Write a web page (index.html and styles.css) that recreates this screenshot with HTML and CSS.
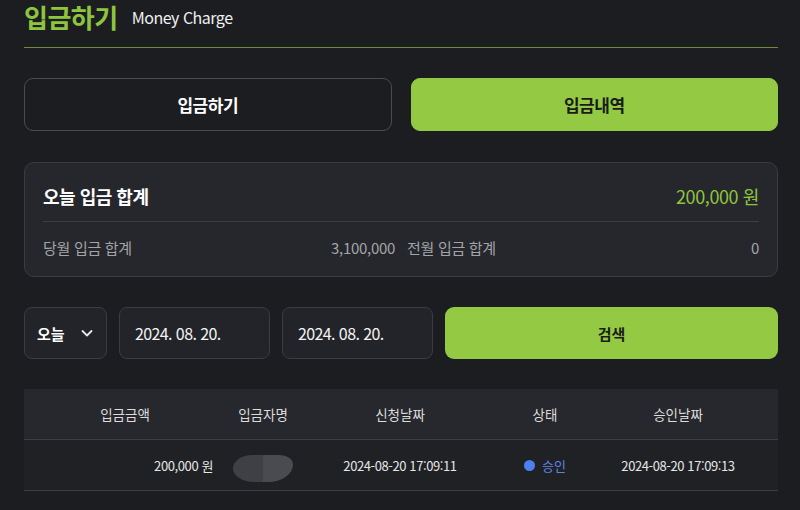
FILE: index.html
```html
<!DOCTYPE html>
<html lang="ko">
<head>
  <meta charset="UTF-8" />
  <meta name="viewport" content="width=device-width, initial-scale=1.0"/>
  <title>입금하기</title>
  <link rel="stylesheet" href="styles.css">
</head>
<body>
  <div class="page">
    <header class="page-head">
      <h1 class="page-title">입금하기</h1>
      <span class="page-sub">Money Charge</span>
    </header>

    <nav class="tabs">
      <button class="tab">입금하기</button>
      <button class="tab active">입금내역</button>
    </nav>

    <section class="summary">
      <div class="summary-top">
        <span class="summary-label">오늘 입금 합계</span>
        <span class="summary-total">200,000 원</span>
      </div>
      <div class="summary-bottom">
        <div class="summary-item">
          <span>당월 입금 합계</span>
          <span>3,100,000</span>
        </div>
        <div class="summary-item">
          <span>전월 입금 합계</span>
          <span>0</span>
        </div>
      </div>
    </section>

    <form class="filter" onsubmit="return false">
      <div class="select">
        <span>오늘</span>
        <svg width="14" height="14" viewBox="0 0 14 14"><path d="M2.5 5 L7 9.5 L11.5 5" fill="none" stroke="#e8e8e8" stroke-width="1.8" stroke-linecap="round" stroke-linejoin="round"/></svg>
      </div>
      <div class="date">2024. 08. 20.</div>
      <div class="date">2024. 08. 20.</div>
      <button class="search">검색</button>
    </form>

    <div class="table">
      <div class="tr th">
        <div>입금금액</div>
        <div>입금자명</div>
        <div>신청날짜</div>
        <div>상태</div>
        <div>승인날짜</div>
      </div>
      <div class="tr td">
        <div class="amount">200,000 원</div>
        <div><span class="blur"></span></div>
        <div class="num">2024-08-20 17:09:11</div>
        <div class="status"><i class="dot"></i>승인</div>
        <div class="num">2024-08-20 17:09:13</div>
      </div>
    </div>
  </div>
</body>
</html>
```

FILE: styles.css
```css
body {
  margin: 0;
  background: #1c1d21;
  color: #ffffff;
  font-family: "Noto Sans CJK KR", "Noto Sans", sans-serif;
}

.page {
  width: 754px;
  padding: 0 22px 0 24px;
}

.page-head {
  display: flex;
  align-items: center;
  gap: 14px;
  height: 32px;
  padding: 1px 0 14px;
  border-bottom: 1px solid #6e8a3a;
}

.page-title {
  margin: 0;
  font-size: 26px;
  line-height: 30px;
  font-weight: bold;
  color: #8dc53f;
  letter-spacing: -0.5px;
}

.page-sub {
  font-size: 16px;
  color: #f0f0f0;
  letter-spacing: -0.5px;
}

.tabs {
  display: grid;
  grid-template-columns: 1fr 1fr;
  gap: 19px;
  margin-top: 30px;
}

.tab {
  height: 53px;
  border: 1px solid #4a4b50;
  border-radius: 9px;
  background: transparent;
  color: #ffffff;
  font-family: inherit;
  font-size: 17px;
  font-weight: bold;
  letter-spacing: -0.5px;
}

.tab.active {
  background: #94c943;
  border-color: #94c943;
  color: #1a1c1a;
}

.summary {
  margin-top: 31px;
  padding: 16px 18px 18px;
  background: #26272c;
  border: 1px solid #3b3c41;
  border-radius: 10px;
}

.summary-top {
  display: flex;
  justify-content: space-between;
  align-items: center;
  height: 34px;
  padding-bottom: 8px;
  border-bottom: 1px solid #3d3e43;
}

.summary-label {
  font-size: 18px;
  font-weight: bold;
  letter-spacing: -0.5px;
}

.summary-total {
  font-size: 18px;
  color: #8dc53f;
  letter-spacing: -0.4px;
}

.summary-bottom {
  display: grid;
  grid-template-columns: 1fr 1fr;
  gap: 12px;
  padding-top: 14px;
  height: 22px;
}

.summary-item {
  display: flex;
  justify-content: space-between;
  align-items: center;
  font-size: 15px;
  color: #a3a4a8;
  letter-spacing: -0.3px;
}

.filter {
  display: grid;
  grid-template-columns: 83px 151px 151px 1fr;
  gap: 12px;
  margin: 30px 0 0;
  height: 52px;
}

.select, .date {
  display: flex;
  align-items: center;
  background: #232429;
  border: 1px solid #3b3c41;
  border-radius: 8px;
}

.select {
  justify-content: space-between;
  padding: 0 12px 0 12px;
  font-size: 15px;
  font-weight: bold;
}

.date {
  padding: 0 15px;
  font-size: 16px;
  color: #f2f2f2;
  letter-spacing: -0.6px;
}

.search {
  border: none;
  border-radius: 9px;
  background: #94c943;
  color: #1a1c1a;
  font-family: inherit;
  font-size: 15px;
  font-weight: bold;
}

.table {
  margin-top: 30px;
  background: #202125;
}

.tr {
  display: grid;
  grid-template-columns: 202px 74px 200px 90px 176px;
  align-items: center;
  text-align: center;
  border-bottom: 1px solid #3d3e43;
}

.th {
  height: 50px;
  background: #27282d;
  font-size: 13.5px;
  color: #dcdcdc;
}

.td {
  height: 50px;
  font-size: 13px;
  color: #e6e6e6;
}

.td .num, .td .amount {
  letter-spacing: -0.4px;
}

.td .amount {
  text-align: right;
  padding-right: 13px;
}

.blur {
  display: inline-block;
  width: 60px;
  height: 27px;
  margin-top: 6px;
  background: linear-gradient(to right, #3f4045 50%, #4a4b50 50%);
  border-radius: 20px 14px 26px 22px / 14px 10px 18px 14px;
  vertical-align: middle;
}

.status {
  display: flex;
  justify-content: center;
  align-items: center;
  gap: 7px;
  color: #5b86e2;
}

.dot {
  width: 11px;
  height: 11px;
  border-radius: 50%;
  background: #4c80ee;
}
```
